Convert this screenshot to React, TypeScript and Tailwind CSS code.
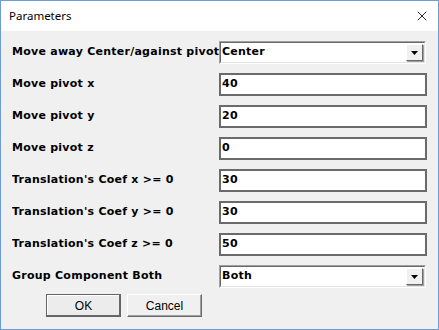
import { X } from "lucide-react";

type Row = {
  label: string;
  value: string;
  combo?: boolean;
};

const rows: Row[] = [
  { label: "Move away Center/against pivot", value: "Center", combo: true },
  { label: "Move pivot x", value: "40" },
  { label: "Move pivot y", value: "20" },
  { label: "Move pivot z", value: "0" },
  { label: "Translation's Coef x >= 0", value: "30" },
  { label: "Translation's Coef y >= 0", value: "30" },
  { label: "Translation's Coef z >= 0", value: "50" },
  { label: "Group Component Both", value: "Both", combo: true },
];

const bold = "font-['DejaVu_Sans',Verdana,sans-serif] text-[11px] font-bold tracking-[0.25px] text-black";

function Combo({ value }: { value: string }) {
  return (
    <div className="flex h-[23px] w-[207px] items-center border border-t-[#a0a0a0] border-l-[#a0a0a0] border-r-white border-b-white bg-white">
      <div className="flex h-full flex-1 items-center border border-t-[#696969] border-l-[#696969] border-r-[#e3e3e3] border-b-[#e3e3e3] pl-[1px]">
        <span className={"flex-1 " + bold}>{value}</span>
        <div className="mr-[1px] flex h-[17px] w-[17px] items-center justify-center border border-t-white border-l-white border-r-[#696969] border-b-[#696969] bg-[#f0f0f0] shadow-[1px_1px_0_#a0a0a0]">
          <svg width="7" height="4" viewBox="0 0 7 4">
            <path d="M0 0h7L3.5 4z" fill="#000" />
          </svg>
        </div>
      </div>
    </div>
  );
}

function TextBox({ value }: { value: string }) {
  return (
    <div className="flex h-[23px] w-[208px] items-center border-2 border-[#6a6a6a] bg-white pl-[1px]">
      <span className={bold}>{value}</span>
    </div>
  );
}

export default function App() {
  return (
    <div className="flex h-[330px] w-[439px] flex-col border border-[#6d9bd5] bg-[#f0f0f0] font-['Liberation_Sans',Arial,sans-serif]">
      <div className="flex h-[30px] items-center justify-between bg-white pl-[8px] pr-[8px]">
        <span className="font-['Noto_Sans','Open_Sans',sans-serif] text-[11.5px] text-black">Parameters</span>
        <X className="h-[16px] w-[16px] text-black" strokeWidth={1.25} />
      </div>

      <div className="flex flex-col gap-[9px] pl-[11px] pt-[10px]">
        {rows.map((r, i) => (
          <div key={i} className="flex h-[23px] items-center">
            <div className={"w-[207px] overflow-hidden whitespace-nowrap " + bold}>{r.label}</div>
            {r.combo ? <Combo value={r.value} /> : <TextBox value={r.value} />}
          </div>
        ))}
      </div>

      <div className="flex gap-[6px] pl-[45px] pt-[6px]">
        <button className="flex h-[23px] w-[75px] items-center justify-center border border-[#646464] bg-[#ececec] text-[12px] text-black shadow-[inset_-1px_-1px_0_#696969,inset_1px_1px_0_#fff]">
          OK
        </button>
        <button className="flex h-[23px] w-[75px] items-center justify-center border border-t-white border-l-white border-r-[#696969] border-b-[#696969] bg-[#f0f0f0] text-[12px] text-black shadow-[inset_-1px_-1px_0_#a0a0a0]">
          Cancel
        </button>
      </div>
    </div>
  );
}
